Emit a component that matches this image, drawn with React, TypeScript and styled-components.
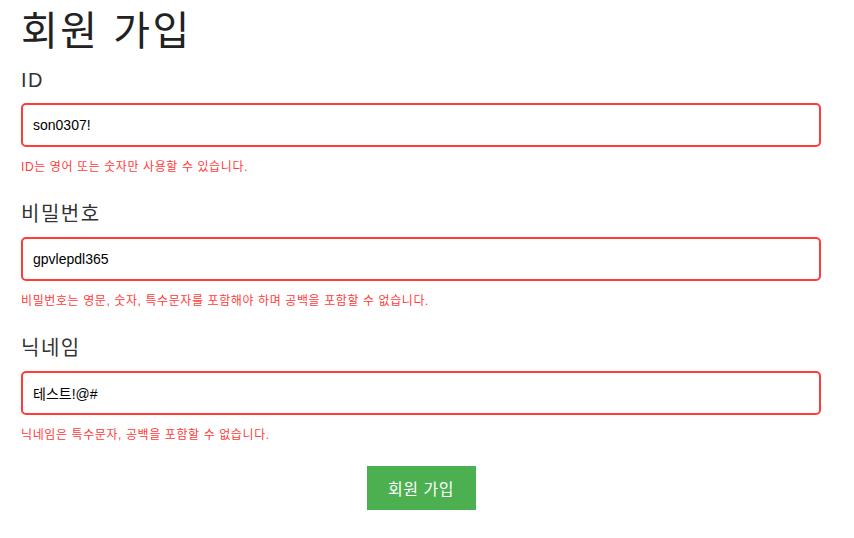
import React from "react";
import styled, { createGlobalStyle } from "styled-components";

const FONT = `"Liberation Sans", Arial, "Noto Sans CJK KR", sans-serif`;

const Global = createGlobalStyle`
  html, body { margin: 0; padding: 0; background: #fff; }
  body { font-family: ${FONT}; }
`;

const Page = styled.div`
  padding: 7px 21px 0 21px;
  width: 800px;
`;

const Title = styled.h1`
  margin: 0;
  font-size: 40px;
  line-height: 48px;
  font-weight: 400;
  letter-spacing: 2.5px;
  color: #222;
`;

const Form = styled.form`
  display: flex;
  flex-direction: column;
  margin-top: 13px;
`;

const Field = styled.div`
  display: flex;
  flex-direction: column;
  margin-bottom: 27px;
  &:last-of-type { margin-bottom: 23px; }
`;

const Label = styled.label`
  font-size: 20px;
  line-height: 24px;
  letter-spacing: 1.5px;
  color: #333;
`;

const Input = styled.input`
  box-sizing: border-box;
  margin-top: 11px;
  width: 800px;
  height: 44px;
  padding: 0 10px;
  border: 2px solid #ff3b3b;
  border-radius: 5px;
  font-family: ${FONT};
  font-size: 14px;
  color: #000;
  outline: none;
`;

const ErrorText = styled.p`
  margin: 12px 0 0 0;
  font-size: 12px;
  line-height: 16px;
  letter-spacing: 0.6px;
  color: #ff3b3b;
`;

const SubmitButton = styled.button`
  align-self: center;
  width: 109px;
  height: 44px;
  border: none;
  background: #4caf50;
  color: #fff;
  font-family: ${FONT};
  font-size: 16px;
  letter-spacing: 0.5px;
  cursor: pointer;
`;

const fields = [
  { id: "id", label: "ID", value: "son0307!", error: "ID는 영어 또는 숫자만 사용할 수 있습니다." },
  { id: "pw", label: "비밀번호", value: "gpvlepdl365", error: "비밀번호는 영문, 숫자, 특수문자를 포함해야 하며 공백을 포함할 수 없습니다." },
  { id: "nick", label: "닉네임", value: "테스트!@#", error: "닉네임은 특수문자, 공백을 포함할 수 없습니다." },
];

export default function App() {
  return (
    <>
      <Global />
      <Page>
        <Title>회원 가입</Title>
        <Form onSubmit={(e) => e.preventDefault()}>
          {fields.map((f) => (
            <Field key={f.id}>
              <Label htmlFor={f.id}>{f.label}</Label>
              <Input id={f.id} defaultValue={f.value} />
              <ErrorText>{f.error}</ErrorText>
            </Field>
          ))}
          <SubmitButton type="submit">회원 가입</SubmitButton>
        </Form>
      </Page>
    </>
  );
}
